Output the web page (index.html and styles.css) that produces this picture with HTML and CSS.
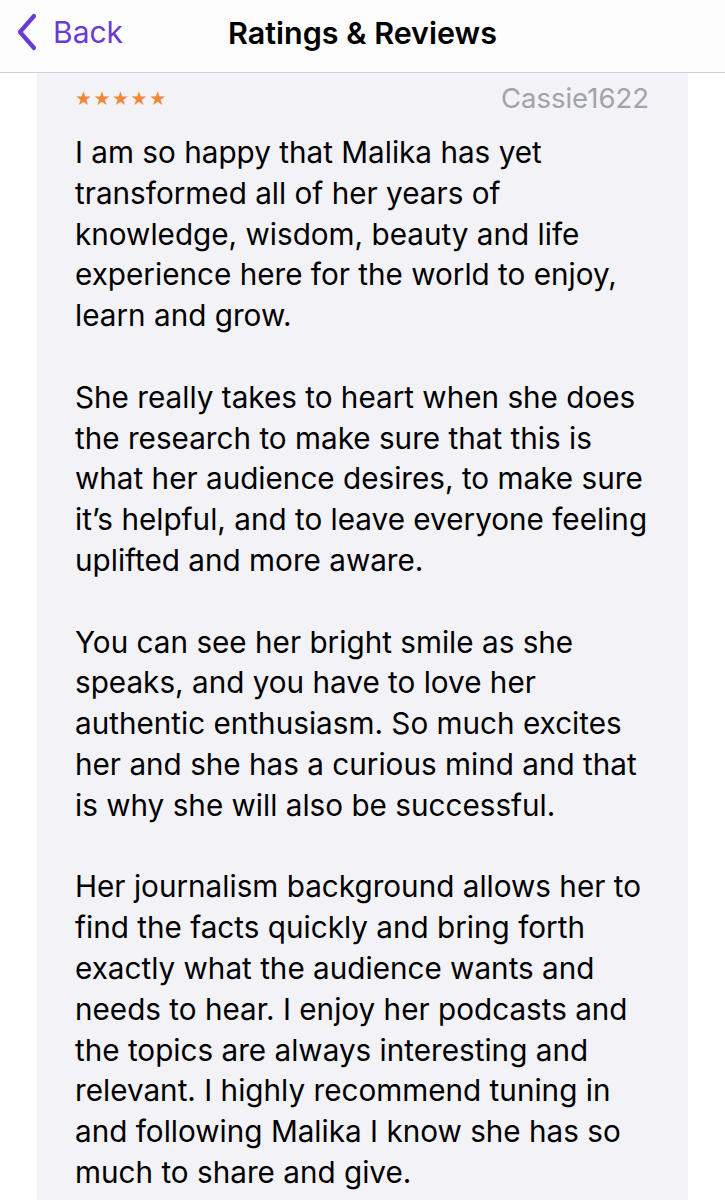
FILE: index.html
```html
<!DOCTYPE html>
<html>
<head>
<meta charset="utf-8">
<link rel="stylesheet" href="styles.css">
</head>
<body>
<header class="nav">
  <div class="back">
    <svg class="chev" width="22" height="38" viewBox="0 0 22 38"><path d="M18 3 L4 19 L18 35" fill="none" stroke="#6a3bd2" stroke-width="4.2" stroke-linecap="round" stroke-linejoin="round"/></svg>
    <span>Back</span>
  </div>
  <div class="title">Ratings &amp; Reviews</div>
</header>
<main class="card">
  <div class="meta">
    <div class="stars">★★★★★</div>
    <div class="user">Cassie1622</div>
  </div>
  <div class="body">
    <p>I am so happy that Malika has yet<br>transformed all of her years of<br>knowledge, wisdom, beauty and life<br>experience here for the world to enjoy,<br>learn and grow.</p>
    <p>She really takes to heart when she does<br>the research to make sure that this is<br>what her audience desires, to make sure<br>it’s helpful, and to leave everyone feeling<br>uplifted and more aware.</p>
    <p>You can see her bright smile as she<br>speaks, and you have to love her<br>authentic enthusiasm. So much excites<br>her and she has a curious mind and that<br>is why she will also be successful.</p>
    <p>Her journalism background allows her to<br>find the facts quickly and bring forth<br>exactly what the audience wants and<br>needs to hear. I enjoy her podcasts and<br>the topics are always interesting and<br>relevant. I highly recommend tuning in<br>and following Malika I know she has so<br>much to share and give.</p>
  </div>
</main>
</body>
</html>
```
FILE: styles.css
```css
html, body {
  margin: 0;
  padding: 0;
  background: #ffffff;
  font-family: Inter, "Liberation Sans", sans-serif;
}
.nav {
  height: 72px;
  border-bottom: 1px solid #cfcfd2;
  background: #fdfdfd;
  display: flex;
  align-items: center;
  justify-content: center;
  position: relative;
}
.back {
  position: absolute;
  left: 16px;
  top: 13px;
  display: flex;
  align-items: center;
  gap: 15px;
  color: #6a3bd2;
  font-size: 30px;
}
.title {
  font-size: 30.5px;
  font-weight: 600;
  color: #000;
  margin-top: -7px;
}
.card {
  margin: 0 37px;
  background: #f2f2f7;
  padding: 8px 30px 30px 38px;
  min-height: 1200px;
}
.meta {
  display: flex;
  justify-content: space-between;
  align-items: center;
  height: 34px;
  padding-right: 9px;
}
.stars {
  color: #f0883a;
  font-size: 19px;
  letter-spacing: 1.5px;
  font-family: "DejaVu Sans", sans-serif;
}
.user {
  color: #a3a3a8;
  font-size: 27.5px;
}
.body {
  margin-top: 17px;
}
.body p {
  margin: 0 0 40.8px 0;
  font-size: 29.7px;
  line-height: 40.8px;
  color: #000;
  white-space: nowrap;
}
```
